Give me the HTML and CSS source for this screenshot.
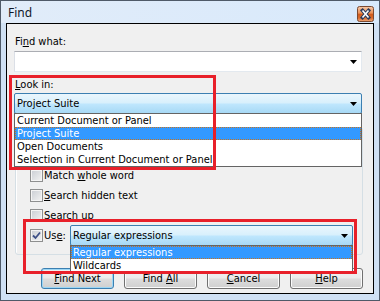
FILE: index.html
```html
<!DOCTYPE html>
<html lang="en">
<head>
    <meta charset="UTF-8">
    <title>Find</title>
    <link rel="stylesheet" href="styles.css">
</head>
<body>
    <div class="window">
        <div class="titlebar">
            <span class="title">Find</span>
            <span class="close">
                <svg width="17" height="16" viewBox="0 0 17 16">
                    <defs>
                        <linearGradient id="cg" x1="0" y1="0" x2="0" y2="1">
                            <stop offset="0" stop-color="#f6c9a8"/>
                            <stop offset="0.45" stop-color="#e98f57"/>
                            <stop offset="0.5" stop-color="#cf5a1c"/>
                            <stop offset="0.75" stop-color="#d9692b"/>
                            <stop offset="1" stop-color="#f0a878"/>
                        </linearGradient>
                    </defs>
                    <rect x="0.5" y="0.5" width="16" height="15" rx="2" fill="url(#cg)" stroke="#7a4a32"/>
                    <path d="M5.5 4.5 L11.5 11.5 M11.5 4.5 L5.5 11.5" stroke="#2b3b5c" stroke-width="3.6" stroke-linecap="square"/>
                    <path d="M5.5 4.5 L11.5 11.5 M11.5 4.5 L5.5 11.5" stroke="#fff" stroke-width="1.6"/>
                </svg>
            </span>
        </div>
        <div class="client">
            <div class="label">Fi<u>n</u>d what:</div>
            <div class="combo edit">
                <span class="value"></span>
                <svg class="arrow" width="7" height="4" viewBox="0 0 7 4"><polygon points="0,0 7,0 3.5,4" fill="#000"/></svg>
            </div>
            <div class="label look-label"><u>L</u>ook in:</div>
            <div class="combo hot look">
                <span class="value">Project Suite</span>
                <svg class="arrow" width="7" height="4" viewBox="0 0 7 4"><polygon points="0,0 7,0 3.5,4" fill="#000"/></svg>
                <ul class="droplist">
                    <li>Current Document or Panel</li>
                    <li class="sel">Project Suite</li>
                    <li>Open Documents</li>
                    <li>Selection in Current Document or Panel</li>
                </ul>
            </div>

            <div class="group">
                <!-- row under the open list, not visible -->
                <div class="row covered"><span class="check"></span></div>
                <div class="row"><span class="check"></span><span>Match <u>w</u>hole word</span></div>
                <div class="row"><span class="check"></span><span><u>S</u>earch hidden text</span></div>
                <div class="row"><span class="check"></span><span>Search <u>u</u>p</span></div>
                <div class="row use-row">
                    <span class="check checked">
                        <svg width="11" height="11" viewBox="0 0 11 11"><path d="M2 5.5 L4.5 8 L9 2.5" fill="none" stroke="#3d4f86" stroke-width="1.8"/></svg>
                    </span>
                    <span>Us<u>e</u>:</span>
                    <div class="combo hot use">
                        <span class="value">Regular expressions</span>
                        <svg class="arrow" width="7" height="4" viewBox="0 0 7 4"><polygon points="0,0 7,0 3.5,4" fill="#000"/></svg>
                        <ul class="droplist">
                            <li class="sel">Regular expressions</li>
                            <li>Wildcards</li>
                        </ul>
                    </div>
                </div>
            </div>

            <div class="buttons">
                <button class="btn default"><u>F</u>ind Next</button>
                <button class="btn">Find <u>A</u>ll</button>
                <button class="btn"><u>C</u>ancel</button>
                <button class="btn"><u>H</u>elp</button>
            </div>

            <!-- annotation frames -->
            <div class="mark mark-look"></div>
            <div class="mark mark-use"></div>
        </div>
    </div>
</body>
</html>
```

FILE: styles.css
```css
* {
    box-sizing: border-box;
}
body {
    margin: 0;
    font-family: "DejaVu Sans Condensed", "DejaVu Sans", sans-serif;
    font-size: 11px;
    color: #000;
}
.window {
    width: 380px;
    height: 301px;
    border: 1px solid #4f5a68;
    background: #d0e1f4;
    padding: 0 5px 6px;
    display: flex;
    flex-direction: column;
}
.titlebar {
    height: 22px;
    margin: 0 -5px;
    padding: 0 5px 0 7px;
    display: flex;
    align-items: center;
    justify-content: space-between;
    background: linear-gradient(90deg, #e1ecf9, #d8e9fb);
}
.title {
    font-family: "Noto Sans", "DejaVu Sans", sans-serif;
    font-size: 12px;
    color: #101828;
}
.close {
    display: flex;
    margin-top: 4px;
}
.client {
    position: relative;
    flex: 1;
    border: 1px solid #000;
    background: #f0f0f0;
    padding-top: 11px;
}
.label {
    line-height: 13px;
    margin-left: 8px;
}
.look-label {
    margin-top: 6px;
}
.combo {
    position: relative;
    height: 21px;
    border: 1px solid #abadb3;
    background: #fff;
    display: flex;
    align-items: center;
    padding: 0 4px 0 2px;
    line-height: 13px;
}
.combo .value {
    flex: 1;
    white-space: nowrap;
}
.edit {
    margin: 3px 0 0 7px;
    width: 348px;
    border-color: #abadb3 #e3e9ef #e3e9ef #dbdfe6;
}
.hot {
    border-color: #3c7fb1;
    border-radius: 2px;
    background: linear-gradient(#eaf6fd, #d9f0fc 45%, #bee6fd 55%, #a7d9f5);
}
.look {
    margin: 2px 0 0 7px;
    width: 348px;
}
.droplist {
    position: absolute;
    left: -1px;
    right: -1px;
    top: 100%;
    margin: 0;
    padding: 0;
    list-style: none;
    background: #fff;
    border: 1px solid #646464;
    z-index: 2;
}
.droplist li {
    height: 13px;
    line-height: 13px;
    padding-left: 2px;
    white-space: nowrap;
}
.droplist .sel {
    background: #3399ff;
    color: #fff;
    outline: 1px dotted #c9731c;
    outline-offset: -1px;
}
.group {
    margin: 13px 0 0 8px;
    width: 348px;
    border: 1px solid #d5dfe5;
    border-radius: 3px;
    box-shadow: inset 1px 1px 0 #fff;
    padding: 17px 0 8px 14px;
}
.row {
    display: flex;
    align-items: center;
    height: 20px;
}
.covered {
    visibility: hidden;
}
.check {
    width: 13px;
    height: 13px;
    margin-right: 1px;
    border: 1px solid #8e8f8f;
    background: linear-gradient(135deg, #c9cdd3, #f3f3f3);
    box-shadow: inset 0 0 0 1px #f4f4f4;
    display: flex;
    align-items: center;
    justify-content: center;
}
.use-row {
    height: 21px;
}
.use {
    margin-left: auto;
    margin-right: 9px;
    width: 283px;
}
.buttons {
    display: flex;
    justify-content: flex-end;
    gap: 10px;
    margin-top: 13px;
    padding-right: 10px;
}
.btn {
    width: 73px;
    height: 21px;
    padding: 0;
    font: inherit;
    color: #000;
    border: 1px solid #707070;
    border-radius: 3px;
    background: linear-gradient(#f2f2f2, #ebebeb 48%, #dddddd 52%, #cfcfcf);
    box-shadow: inset 0 0 0 1px #fbfbfb;
}
.btn.default {
    border-color: #3c7fb1;
    box-shadow: inset 0 0 0 1px #9cd6f4;
}
.mark {
    position: absolute;
    border: 3px solid #e8202a;
    z-index: 5;
}
.mark-look {
    left: 2px;
    top: 51px;
    width: 207px;
    height: 95px;
}
.mark-use {
    left: 16px;
    top: 195px;
    width: 334px;
    height: 55px;
}
```
